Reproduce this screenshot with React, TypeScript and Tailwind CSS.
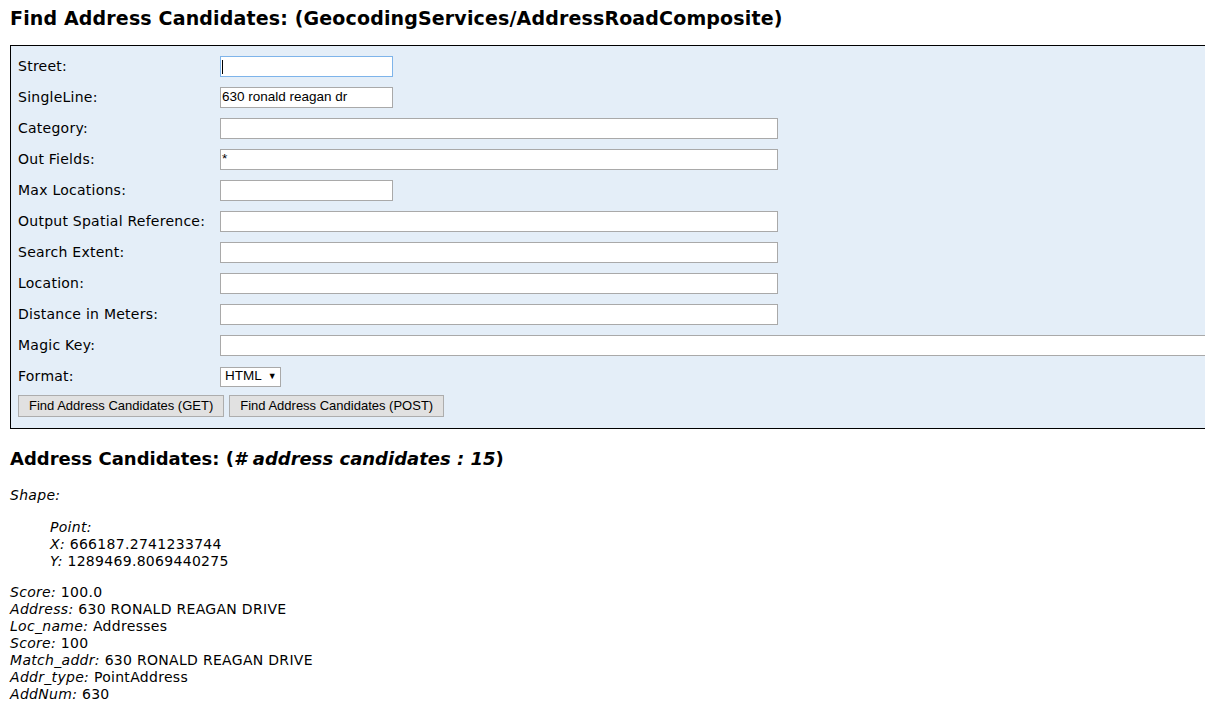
import React from "react";

const verdana = { fontFamily: '"DejaVu Sans", Verdana, sans-serif' };

type Field = { label: string; value?: string; wide?: "sm" | "md" | "lg"; focus?: boolean };

const fields: Field[] = [
  { label: "Street:", wide: "sm", focus: true },
  { label: "SingleLine:", value: "630 ronald reagan dr", wide: "sm" },
  { label: "Category:", wide: "md" },
  { label: "Out Fields:", value: "*", wide: "md" },
  { label: "Max Locations:", wide: "sm" },
  { label: "Output Spatial Reference:", wide: "md" },
  { label: "Search Extent:", wide: "md" },
  { label: "Location:", wide: "md" },
  { label: "Distance in Meters:", wide: "md" },
  { label: "Magic Key:", wide: "lg" },
];

const widths = { sm: "w-[173px]", md: "w-[558px]", lg: "w-[1100px]" };

function TextBox({ f }: { f: Field }) {
  return (
    <div
      className={`h-[21px] ${widths[f.wide ?? "md"]} bg-white border ${
        f.focus ? "border-[#7eb4ea]" : "border-[#a9a9a9]"
      } flex items-center px-[1px] text-[13.5px] tracking-normal text-black font-['Liberation_Sans',Arial,sans-serif]`}
    >
      {f.focus ? <span className="w-px h-[14px] bg-black" /> : f.value}
    </div>
  );
}

function Btn({ children }: { children: React.ReactNode }) {
  return (
    <div className="h-[22px] px-[10px] flex items-center border border-[#adadad] bg-[#e1e1e1] text-[13px] tracking-normal text-black font-['Liberation_Sans',Arial,sans-serif]">
      {children}
    </div>
  );
}

function Pair({ k, v }: { k: string; v: string }) {
  return (
    <div>
      <i>{k}:</i> {v}
    </div>
  );
}

export default function App() {
  return (
    <div className="w-full h-[705px] overflow-hidden bg-white text-black" style={verdana}>
      <div className="w-[1400px] pl-[10px] pt-[7px]">
        <h2 className="text-[19px] leading-[22px] font-bold tracking-[0.15px]">
          Find Address Candidates: (GeocodingServices/AddressRoadComposite)
        </h2>

        <div className="mt-[16px] w-[1300px] border border-black bg-[#e4eef8] pl-[7px] pt-[5px] pb-[11px] text-[14px] tracking-[0.25px]">
          {fields.map((f) => (
            <div key={f.label} className="h-[31px] flex items-center">
              <div className="w-[202px] shrink-0">{f.label}</div>
              <TextBox f={f} />
            </div>
          ))}
          <div className="h-[31px] flex items-center">
            <div className="w-[202px] shrink-0">Format:</div>
            <div className="h-[20px] w-[61px] bg-white border border-[#a9a9a9] flex items-center gap-[6px] pl-[4px] text-[13.5px] tracking-normal font-['Liberation_Sans',Arial,sans-serif]">
              HTML
              <span className="text-[9px]">▼</span>
            </div>
          </div>
          <div className="pt-[3px] flex gap-[5px]">
            <Btn>Find Address Candidates (GET)</Btn>
            <Btn>Find Address Candidates (POST)</Btn>
          </div>
        </div>

        <h2 className="mt-[19px] text-[18px] leading-[22px] font-bold">
          Address Candidates: (<i># address candidates : 15</i>)
        </h2>

        <div className="mt-[17px] text-[14px] leading-[17px] tracking-[0.3px]">
          <i>Shape:</i>
          <div className="mt-[15px] pl-[40px]">
            <div>
              <i>Point:</i>
            </div>
            <Pair k="X" v="666187.2741233744" />
            <Pair k="Y" v="1289469.8069440275" />
          </div>
          <div className="mt-[14px]">
            <Pair k="Score" v="100.0" />
            <Pair k="Address" v="630 RONALD REAGAN DRIVE" />
            <Pair k="Loc_name" v="Addresses" />
            <Pair k="Score" v="100" />
            <Pair k="Match_addr" v="630 RONALD REAGAN DRIVE" />
            <Pair k="Addr_type" v="PointAddress" />
            <Pair k="AddNum" v="630" />
          </div>
        </div>
      </div>
    </div>
  );
}
